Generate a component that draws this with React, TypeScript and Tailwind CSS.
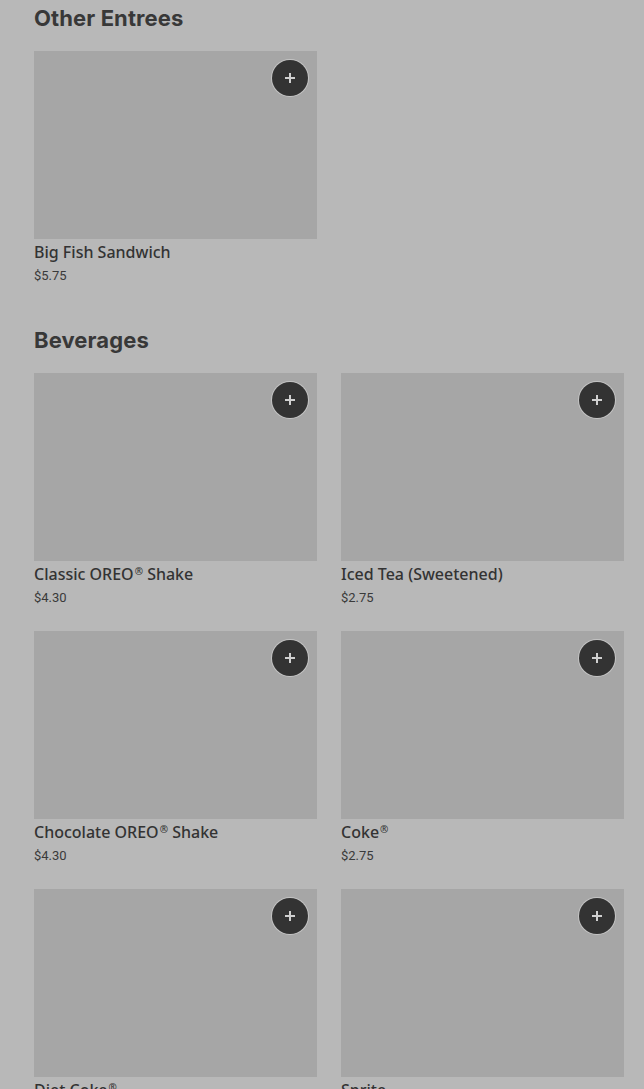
import React from 'react';

type Item = { name: string; price: string };

const sections: { title: string; items: Item[] }[] = [
  { title: 'Other Entrees', items: [{ name: 'Big Fish Sandwich', price: '$5.75' }] },
  {
    title: 'Beverages',
    items: [
      { name: 'Classic OREO® Shake', price: '$4.30' },
      { name: 'Iced Tea (Sweetened)', price: '$2.75' },
      { name: 'Chocolate OREO® Shake', price: '$4.30' },
      { name: 'Coke®', price: '$2.75' },
      { name: 'Diet Coke®', price: '$2.75' },
      { name: 'Sprite', price: '$2.75' },
    ],
  },
];

// render ® raised and small, as on the menu
const renderName = (name: string) =>
  name.split('®').map((part, i, arr) => (
    <React.Fragment key={i}>
      {part}
      {i < arr.length - 1 && <sup className="text-[10px] -top-[5px] ml-px">®</sup>}
    </React.Fragment>
  ));

const ItemCard = ({ item }: { item: Item }) => (
  <div className="flex flex-col">
    <div className="relative h-[188px] bg-[#a6a6a6]">
      <button className="absolute top-[9px] right-[9px] w-9 h-9 rounded-full bg-[#333333] ring-1 ring-[#c4c4c4] flex items-center justify-center">
        <svg width="12" height="12" viewBox="0 0 12 12">
          <path d="M6 1v10M1 6h10" stroke="#d0d0d0" strokeWidth="2" />
        </svg>
      </button>
    </div>
    <div
      className="mt-px h-6 text-[16px] leading-6 font-medium text-[#333333]"
      style={{ fontFamily: '"Noto Sans", sans-serif' }}
    >
      {renderName(item.name)}
    </div>
    <div className="mt-[2px] text-[13px] leading-5 text-[#3a3a3a]">{item.price}</div>
  </div>
);

export default function App() {
  return (
    <div
      className="min-h-screen bg-[#b8b8b8] pl-[34px] pr-5 pt-1 overflow-hidden"
      style={{ fontFamily: 'Roboto, "Noto Sans", sans-serif' }}
    >
      {sections.map((s, i) => (
        <section key={s.title} className={i > 0 ? 'mt-[40px]' : ''}>
          <h2
            className="text-[22px] leading-7 font-bold text-[#383838] tracking-[0.1px] mb-[19px]"
            style={{ fontFamily: 'Inter, sans-serif' }}
          >
            {s.title}
          </h2>
          <div className="grid grid-cols-2 gap-x-6 gap-y-[23px]">
            {s.items.map(item => (
              <ItemCard key={item.name} item={item} />
            ))}
          </div>
        </section>
      ))}
    </div>
  );
}
